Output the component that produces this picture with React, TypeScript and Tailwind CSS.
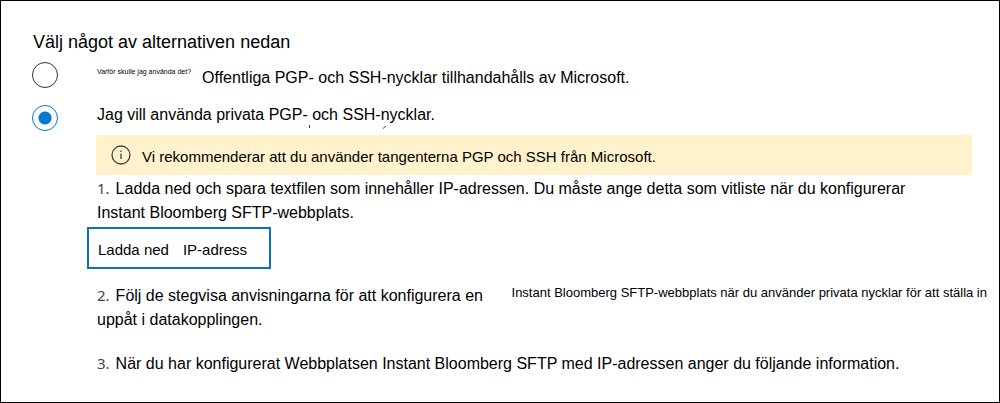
import type { ReactNode } from "react";

const sans = "font-['Liberation_Sans',Arial,sans-serif]";

function StepLine({ number, children }: { number: string; children: ReactNode }) {
  return (
    <span className="flex items-baseline gap-[6px]">
      <span className="font-['Noto_Sans','Open_Sans',sans-serif] text-[15px] leading-6 text-[#444]">{number}</span>
      <span>{children}</span>
    </span>
  );
}

export default function App() {
  return (
    <main className={`min-h-screen border border-black bg-white pt-[29px] pb-4 pl-[31px] pr-3 text-[16px] leading-6 text-black ${sans}`}>
      <fieldset>
        <legend className="pl-px text-[18px] leading-6">Välj något av alternativen nedan</legend>
        <div className="mt-2 flex items-start gap-[39px]">
          <input
            id="public-keys"
            type="radio"
            name="keys"
            className="size-[26px] shrink-0 appearance-none rounded-full border border-[#333] bg-white"
          />
          <label htmlFor="public-keys" className="flex gap-[11px] pt-1">
            <span className="text-[7px] leading-3">Varför skulle jag använda det?</span>
            <span>Offentliga PGP- och SSH-nycklar tillhandahålls av Microsoft.</span>
          </label>
        </div>
        <div className="mt-3 flex items-start gap-[39px]">
          <input
            id="private-keys"
            type="radio"
            name="keys"
            defaultChecked
            className="mt-[3px] size-[26px] shrink-0 appearance-none rounded-full border border-[#0078d4] bg-white bg-[radial-gradient(circle,#0078d4_6px,transparent_7px)]"
          />
          <label htmlFor="private-keys" className="relative pt-px">
            Jag vill använda privata PGP- och SSH-nycklar.
            <svg viewBox="0 0 80 4" className="absolute top-[23px] left-[211px] h-1 w-20" fill="none" stroke="#444" aria-hidden="true">
              <path d="M1.5 0v3M75 3.5l3-2.5" />
            </svg>
          </label>
        </div>
      </fieldset>

      <section className="pl-[65px]">
        <div className="mt-1 mr-[15px] -ml-px flex h-10 items-center gap-[11px] bg-[#fff2cc] pl-[15px] text-[15px]">
          <svg viewBox="0 0 20 20" className="size-5 shrink-0" fill="none" stroke="#444" aria-hidden="true">
            <circle cx="10" cy="10" r="9" strokeWidth="1.3" />
            <path d="M10 8.5v5.5M10 5.5v1.5" strokeWidth="1.3" />
          </svg>
          <p className="pt-1">Vi rekommenderar att du använder tangenterna PGP och SSH från Microsoft.</p>
        </div>
        <p className="mt-px">
          <StepLine number="1.">
            Ladda ned och spara textfilen som innehåller IP-adressen. Du måste ange detta som vitliste när du konfigurerar
          </StepLine>
          <span className="block">Instant Bloomberg SFTP-webbplats.</span>
        </p>
        <button type="button" className="mt-[2px] -ml-[10px] flex h-[42px] items-center gap-[14px] border-2 border-[#106ebe] pl-[9px] pr-[22px] pt-1 text-[15px]">
          <span>Ladda ned</span>
          <span>IP-adress</span>
        </button>
        <div className="mt-[14px] flex items-start justify-between gap-4">
          <p>
            <StepLine number="2.">Följ de stegvisa anvisningarna för att konfigurera en</StepLine>
            <span className="block">uppåt i datakopplingen.</span>
          </p>
          <p className="whitespace-nowrap text-[13px] leading-5">
            Instant Bloomberg SFTP-webbplats när du använder privata nycklar för att ställa in
          </p>
        </div>
        <p className="mt-[19px]">
          <StepLine number="3.">
            När du har konfigurerat Webbplatsen Instant Bloomberg SFTP med IP-adressen anger du följande information.
          </StepLine>
        </p>
      </section>
    </main>
  );
}
